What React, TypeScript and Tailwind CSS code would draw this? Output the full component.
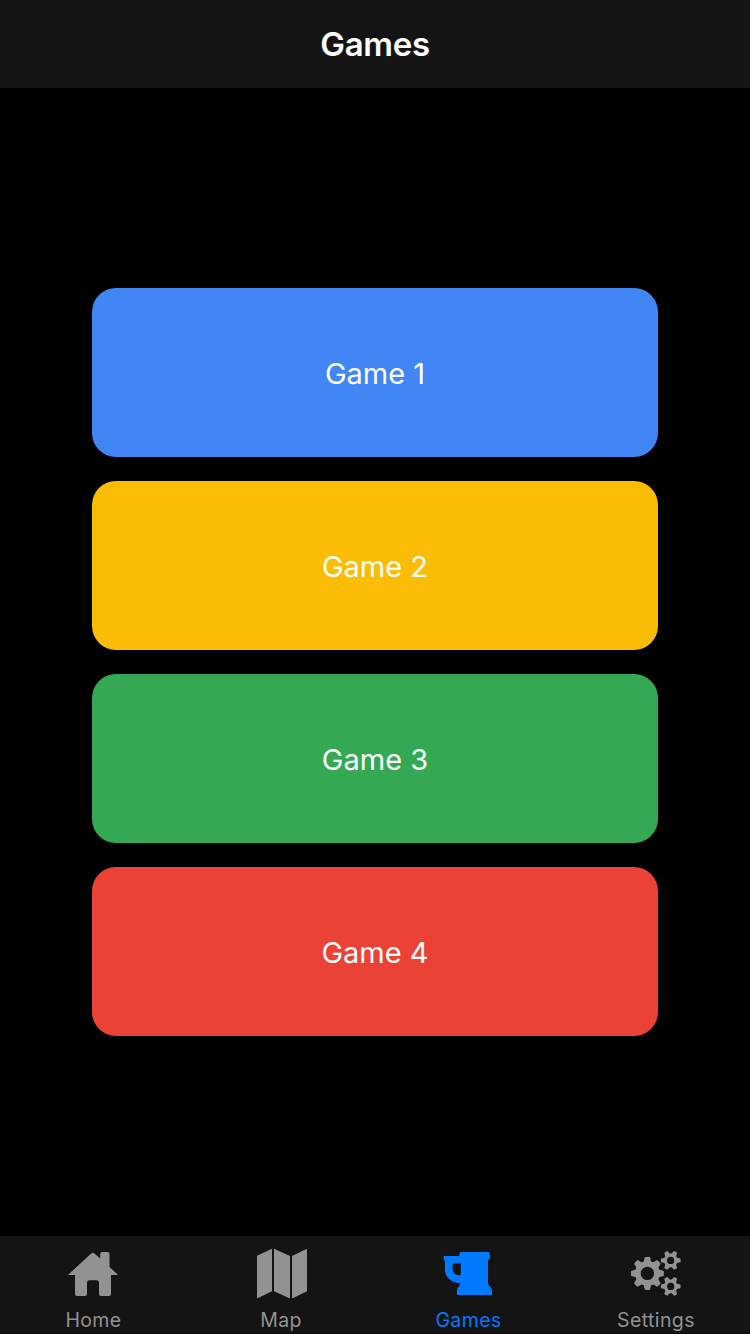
import React from "react";

function gearPath(cx: number, cy: number, teeth: number, outer: number, body: number, hole: number, rootHalf: number, tipHalf: number) {
  const step = (Math.PI * 2) / teeth;
  const point = (r: number, a: number) => `${(cx + r * Math.cos(a)).toFixed(2)} ${(cy + r * Math.sin(a)).toFixed(2)}`;
  let d = "";
  for (let i = 0; i < teeth; i++) {
    const a = i * step;
    const root = Math.asin(rootHalf / body);
    const tip = Math.asin(tipHalf / outer);
    d += `${i === 0 ? "M" : `A${body} ${body} 0 0 1 `}${point(body, a - root)}L${point(outer, a - tip)}A${outer} ${outer} 0 0 1 ${point(outer, a + tip)}L${point(body, a + root)}`;
  }
  return `${d}A${body} ${body} 0 0 1 ${point(body, -Math.asin(rootHalf / body))}Z M${cx + hole} ${cy}a${hole} ${hole} 0 1 0 ${-2 * hole} 0a${hole} ${hole} 0 1 0 ${2 * hole} 0Z`;
}

const homePath =
  "M68.4 1274.5 91.2 1253.5Q92.8 1252.2 94.4 1253.5L100.2 1258.5V1254Q100.2 1252 102.2 1252H107.5Q109.5 1252 109.5 1254V1267L117.7 1274.5Q117.8 1275 117 1275H111V1294Q111 1296 109 1296H101Q99 1296 99 1294V1283Q99 1280.3 96.5 1280.3H89.5Q87 1280.3 87 1283V1294Q87 1296 85 1296H77Q75 1296 75 1294V1275H69Q68 1275 68.4 1274.5Z";
const mapPath =
  "M257 1255.7 271.4 1249.1Q272 1248.8 272 1249.5V1291.2L257.6 1298.2Q257 1298.5 257 1297.8ZM274 1249.3Q274 1248.7 274.6 1249L290 1256V1297.8Q290 1298.5 289.4 1298.2L274 1291.2ZM292 1256 306.4 1249.1Q307 1248.8 307 1249.5V1291.2L292.6 1298.2Q292 1298.5 292 1297.8Z";
const mugPath =
  "M460 1252H489.3L490.3 1258 488 1260.3V1283.3C488.6 1286 491.5 1287.3 492 1289.5V1295H457V1289.5C457.4 1287.3 460 1285.8 460.8 1283.2C453 1283 445 1278.8 445 1270V1261.5L443.4 1258.5 444 1256H459.2ZM460.7 1263.5H452.6V1268C452.6 1272.8 455.2 1275.3 460.7 1275.3Z";
const settingsPath = [
  gearPath(647.4, 1273.4, 8, 16.5, 12.5, 6.7, 3.7, 2.5),
  gearPath(670.7, 1260.4, 6, 9.9, 6.9, 3.6, 2.6, 1.8),
  gearPath(670.7, 1286.4, 6, 9.9, 6.9, 3.6, 2.6, 1.8),
].join(" ");

const games = [
  { label: "Game 1", color: "bg-[#4285f4]" },
  { label: "Game 2", color: "bg-[#fbbc05]" },
  { label: "Game 3", color: "bg-[#34a853]" },
  { label: "Game 4", color: "bg-[#ea4335]" },
];

const tabs = [
  { label: "Home", path: homePath, viewBox: "66 1244 56 56", color: "text-[#929292]", width: "w-[187px]" },
  { label: "Map", path: mapPath, viewBox: "253 1244 56 56", color: "text-[#929292]", width: "w-[188px]" },
  { label: "Games", path: mugPath, viewBox: "441 1244 56 56", color: "text-[#007aff]", width: "w-[187px]" },
  { label: "Settings", path: settingsPath, viewBox: "628 1244 56 56", color: "text-[#929292]", width: "w-[188px]" },
];

export default function App() {
  return (
    <div className="flex h-[1334px] w-[750px] flex-col overflow-hidden bg-black font-['Inter','Liberation_Sans',sans-serif]">
      <header className="flex h-[88px] shrink-0 items-center justify-center bg-[#141414]">
        <h1 className="text-[33px] leading-10 font-semibold tracking-[-0.3px] text-white">Games</h1>
      </header>
      <main className="flex min-h-0 flex-1 flex-col items-center gap-6 pt-[200px]">
        {games.map((game) => (
          <button key={game.label} className={`flex h-[169px] w-[566px] shrink-0 items-center justify-center rounded-[24px] pt-[3px] text-[29px] leading-9 font-[370] text-white ${game.color}`}>
            {game.label}
          </button>
        ))}
      </main>
      <nav className="flex h-[98px] shrink-0 border-b border-[#13060c] bg-[#141414]">
        {tabs.map((tab) => (
          <button key={tab.label} className={`flex flex-col items-center pt-2 ${tab.width} ${tab.color}`}>
            <svg className="h-14 w-14 shrink-0" viewBox={tab.viewBox} fill="currentColor" fillRule="evenodd" aria-hidden="true">
              <path d={tab.path} />
            </svg>
            <span className="mt-2 text-[19.5px] leading-6 tracking-[0.4px]">{tab.label}</span>
          </button>
        ))}
      </nav>
    </div>
  );
}
